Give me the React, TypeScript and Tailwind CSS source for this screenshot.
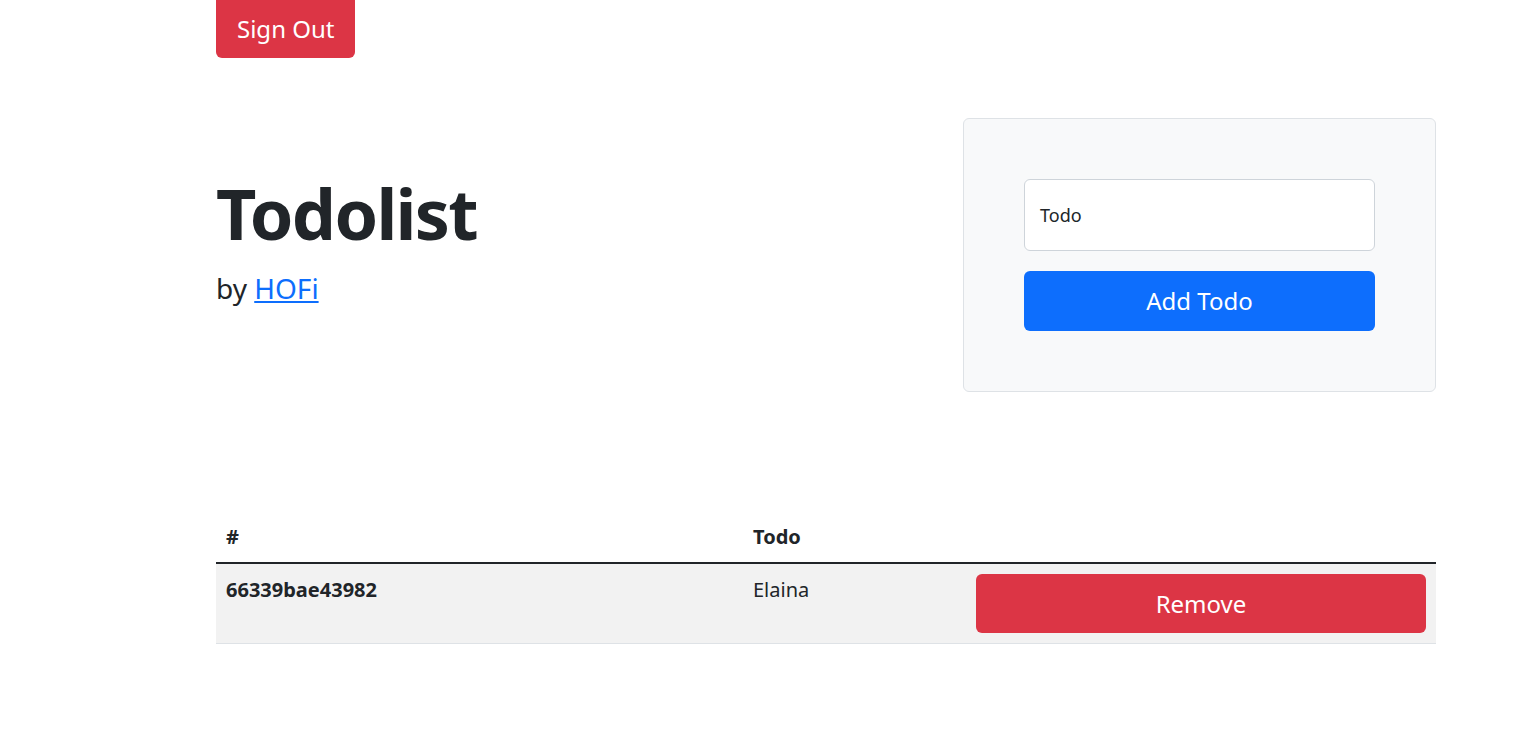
import React, { useState } from "react";

type Todo = { id: string; text: string };

const App = () => {
  const [todos] = useState<Todo[]>([{ id: "66339bae43982", text: "Elaina" }]);

  return (
    <div className="min-h-screen bg-white font-['Noto_Sans',sans-serif] text-[#212529]">
      <div className="ml-[216px] w-[1220px]">
        <button className="h-[58px] px-[21px] rounded-b-[6px] bg-[#dc3545] text-[24px] text-white">
          Sign Out
        </button>

        <div className="mt-[60px] flex items-start">
          <div className="mt-[53px] flex-1">
            <h1 className="text-[70px] font-bold leading-[84px] tracking-[-1.7px]">
              Todolist
            </h1>
            <p className="mt-[12px] text-[28px] leading-[42px]">
              by{" "}
              <a href="#" className="text-[#0d6efd] underline">
                HOFi
              </a>
            </p>
          </div>

          <div className="w-[473px] rounded-[6px] border border-[#dee2e6] bg-[#f8f9fa] px-[60px] py-[60px]">
            <div className="flex h-[72px] items-center rounded-[6px] border border-[#ced4da] bg-white px-[15px] text-[18px]">
              Todo
            </div>
            <button className="mt-[20px] h-[60px] w-full rounded-[6px] bg-[#0d6efd] text-[24px] text-white">
              Add Todo
            </button>
          </div>
        </div>

        <table className="mt-[120px] w-full border-collapse text-[20px]">
          <thead>
            <tr className="border-b-2 border-[#212529]">
              <th className="w-[527px] p-[10px] text-left leading-[30px]">#</th>
              <th className="w-[223px] p-[10px] text-left leading-[30px]">Todo</th>
              <th className="p-[10px]"></th>
            </tr>
          </thead>
          <tbody>
            {todos.map((todo) => (
              <tr key={todo.id} className="border-b border-[#dee2e6] bg-[#f2f2f2]">
                <th className="p-[10px] text-left align-top leading-[32px]">{todo.id}</th>
                <td className="p-[10px] align-top leading-[32px]">{todo.text}</td>
                <td className="p-[10px]">
                  <button className="block h-[59px] w-full rounded-[6px] bg-[#dc3545] text-[24px] text-white">
                    Remove
                  </button>
                </td>
              </tr>
            ))}
          </tbody>
        </table>
      </div>
    </div>
  );
};

export default App;
